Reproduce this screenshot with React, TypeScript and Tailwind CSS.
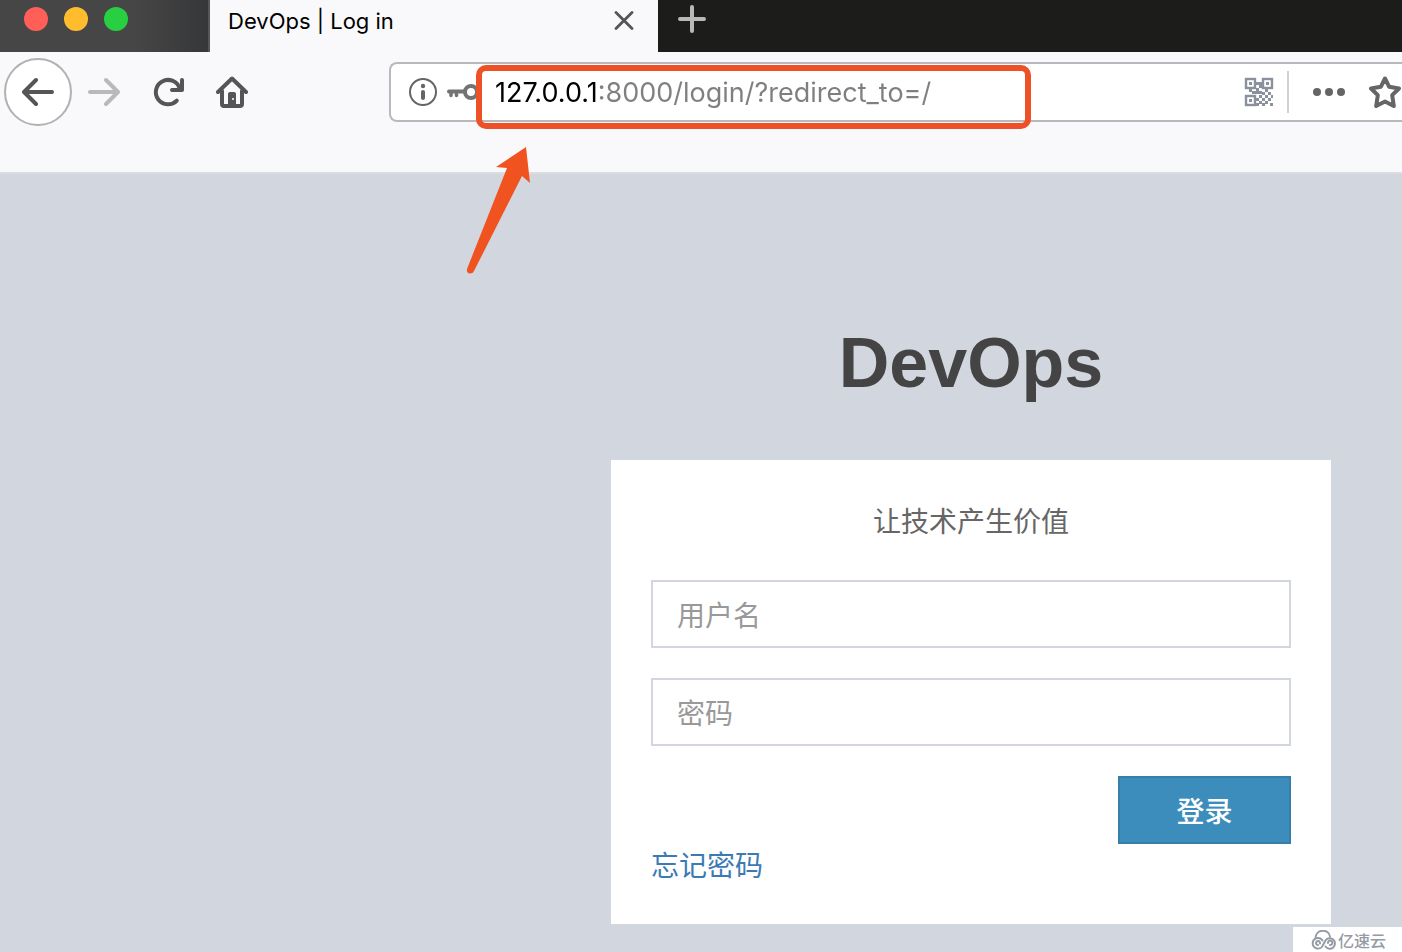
import { useState } from "react";

const BackIcon = () => (
  <svg width="32" height="32" viewBox="0 0 32 32" fill="none" stroke="currentColor" strokeWidth="4" strokeLinecap="round" strokeLinejoin="round">
    <path d="M14 4 L2 16 L14 28 M3 16 H30" />
  </svg>
);

const ForwardIcon = () => (
  <svg width="32" height="32" viewBox="0 0 32 32" fill="none" stroke="currentColor" strokeWidth="4" strokeLinecap="round" strokeLinejoin="round">
    <path d="M18 4 L30 16 L18 28 M29 16 H2" />
  </svg>
);

const ReloadIcon = () => (
  <svg width="32" height="32" viewBox="0 0 32 32" fill="none" stroke="currentColor" strokeWidth="4" strokeLinecap="round" strokeLinejoin="round">
    <path d="M24.8 24.6 A12.2 12.2 0 1 1 27.5 12" />
    <path d="M30 4 V14 H20" />
    <path d="M30 8 V14 H24 Z" fill="currentColor" stroke="none" />
  </svg>
);

const HomeIcon = () => (
  <svg width="32" height="32" viewBox="0 0 32 32" fill="none" stroke="currentColor" strokeWidth="4" strokeLinecap="round" strokeLinejoin="round">
    <path d="M2 16 L16 2.5 L30 16" />
    <path d="M6 15 V28 Q6 30 8 30 H24 Q26 30 26 28 V15" />
    <path d="M12 30 V18 Q12 16 14 16 H18 Q20 16 20 18 V30 Z" fill="currentColor" stroke="none" />
    <circle cx="17" cy="23" r="1" fill="#fff" stroke="none" />
  </svg>
);

const InfoIcon = () => (
  <svg width="28" height="28" viewBox="0 0 28 28" fill="none" stroke="currentColor">
    <circle cx="14" cy="14" r="13" strokeWidth="2" />
    <circle cx="14" cy="8" r="2.2" fill="currentColor" stroke="none" />
    <path d="M14 14 V20" strokeWidth="4" strokeLinecap="round" />
  </svg>
);

const KeyIcon = () => (
  <svg width="32" height="32" viewBox="0 0 32 32" fill="none" stroke="currentColor">
    <circle cx="24" cy="16" r="6" strokeWidth="4" />
    <path d="M2 15.5 H17" strokeWidth="4" strokeLinecap="round" />
    <path d="M4 16 V19.500 M9.5 16 V19.500" strokeWidth="3.5" strokeLinecap="round" />
  </svg>
);

const QrIcon = () => (
  <svg width="30" height="30" viewBox="0 0 30 30" fill="none" stroke="currentColor" strokeWidth="2.4">
    <rect x="2" y="2" width="9" height="9" />
    <rect x="19" y="2" width="9" height="9" />
    <rect x="2" y="19" width="9" height="9" />
    <path d="M5 5h3v3h-3z M22 5h3v3h-3z M5 22h3v3h-3z" fill="currentColor" stroke="none" />
    <path
      d="M12 5h6v3h-6z M12 11h3v3h-3z M15 8h3v3h-3z M5 12h3v3h-3z M8 14h4v3h-4z M12 14h6v3h-6z M21 12h3v3h-3z M18 15h3v3h-3z M24 15h3v3h-3z M15 18h3v3h-3z M21 18h3v3h-3z M27 18h2v3h-2z M12 21h3v3h-3z M18 21h3v3h-3z M24 21h3v3h-3z M15 24h3v3h-3z M21 24h3v3h-3z M26 26h3v3h-3z M12 26h3v3h-3z M18 26h3v3h-3z"
      fill="currentColor"
      stroke="none"
    />
  </svg>
);

const MoreIcon = () => (
  <svg width="32" height="32" viewBox="0 0 32 32" fill="currentColor">
    <circle cx="4" cy="16" r="4" />
    <circle cx="16" cy="16" r="4" />
    <circle cx="28" cy="16" r="4" />
  </svg>
);

const StarIcon = () => (
  <svg width="32" height="32" viewBox="0 0 32 32" fill="none" stroke="currentColor" strokeWidth="4" strokeLinejoin="round">
    <path d="M16 2.5 L20.2 10.8 L30 12.5 L23.2 19.2 L24.8 30 L16 25.4 L7.2 30 L8.8 19.2 L2 12.5 L11.8 10.8 Z" />
  </svg>
);

const CloudIcon = () => (
  <svg width="26" height="20" viewBox="0 0 26 20" fill="none" stroke="currentColor" strokeWidth="2" strokeLinecap="round">
    <path d="M4.5 8.5 C4.500 -1.500 18 -1.500 19 6.500" />
    <path d="M9 13.500 A2 2 0 1 0 7 15 M7 8 A5.300 5.300 0 1 0 12 15 L14.500 10.500 A5.200 5.200 0 1 1 14.500 16.500 M7 8 Q10 8 11.500 10.500" />
    <path d="M17 13 A2.200 2.200 0 1 1 19 15" />
  </svg>
);

const App = () => {
  const [url, setUrl] = useState("127.0.0.1:8000/login/?redirect_to=/");

  return (
    <div className="relative flex min-h-screen flex-col overflow-hidden bg-[#d2d6de] font-['Noto_Sans_CJK_SC',sans-serif]">
      {/* Tab strip */}
      <div className="flex h-13 bg-[#1c1d1a]">
        <div className="flex w-[210px] shrink-0 items-center gap-4 border-r-2 border-[#55565a] bg-linear-to-r from-[#464646] from-65% to-[#363739] pb-3.5 pl-6">
          <button aria-label="Close window" className="size-6 rounded-full bg-[#ff5f57]" />
          <button aria-label="Minimize window" className="size-6 rounded-full bg-[#ffbd2e]" />
          <button aria-label="Zoom window" className="size-6 rounded-full bg-[#28cf41]" />
        </div>
        <div className="flex w-[448px] shrink-0 items-center justify-between bg-[#f9f9fb] pr-6 pb-2.5 pl-[18px]">
          <span className="font-['Inter',sans-serif] text-[22px] text-black">DevOps | Log in</span>
          <button aria-label="Close tab" className="text-[#555557]">
            <svg width="20" height="20" viewBox="0 0 20 20" fill="none" stroke="currentColor" strokeWidth="2.8" strokeLinecap="round">
              <path d="M2 1.500 L18 17.500 M18 1.500 L2 17.500" />
            </svg>
          </button>
        </div>
        <button aria-label="New tab" className="ml-5 pb-3.5 text-[#b8b9b7]">
          <svg width="28" height="28" viewBox="0 0 28 28" fill="none" stroke="currentColor" strokeWidth="4" strokeLinecap="round">
            <path d="M14 2 V26 M2 14 H26" />
          </svg>
        </button>
      </div>

      {/* Toolbar */}
      <div className="relative z-10 flex h-[122px] items-start border-b-2 border-[#dcdde1] bg-[#f9f9fb] pt-1.5 pl-1">
        <div className="flex h-17 items-center gap-8 text-[#555557]">
          <div className="flex items-center gap-4">
            <button aria-label="Back" className="flex size-17 items-center justify-center rounded-full border-2 border-[#b1b1b3] bg-white">
              <BackIcon />
            </button>
            <button aria-label="Forward" className="text-[#b9b9bb]">
              <ForwardIcon />
            </button>
          </div>
          <button aria-label="Reload">
            <ReloadIcon />
          </button>
          <button aria-label="Home">
            <HomeIcon />
          </button>
        </div>

        <div className="relative mt-1 ml-[141px] flex h-15 flex-1 items-center rounded-l-lg border-2 border-r-0 border-[#b9b9bc] bg-white pr-px pl-[18px] text-[#656567]">
          <button aria-label="Site information">
            <InfoIcon />
          </button>
          <button aria-label="Saved login" className="ml-2.5 text-[#737375]">
            <KeyIcon />
          </button>
          {/* host in black, the rest of the address in gray */}
          <input
            type="text"
            aria-label="Address"
            value={url}
            onChange={(e) => setUrl(e.target.value)}
            className="ml-4 h-14 min-w-0 flex-1 bg-linear-to-r from-black from-[104px] to-[#7f7f81] to-[104px] bg-clip-text font-['Inter',sans-serif] text-[27px] text-transparent outline-none"
          />
          <button aria-label="QR code" className="text-[#8a909c]">
            <QrIcon />
          </button>
          <span className="mx-[13px] h-[42px] w-0.5 bg-[#d0d0d2]" />
          <button aria-label="Page actions" className="ml-[11px]">
            <MoreIcon />
          </button>
          <button aria-label="Bookmark" className="ml-6">
            <StarIcon />
          </button>

          <div className="pointer-events-none absolute top-px left-[85px] h-16 w-[555px] rounded-[10px] border-6 border-[#ee5028]" />
          <svg className="pointer-events-none absolute top-[82px] left-[74px]" width="68" height="130" viewBox="0 0 68 130" fill="#f0531f">
            <path d="M61 1 L31 21 L42 22 L2 123 Q1.500 127 5 127.500 Q8 127.500 9 125 L57 30 L65 37 Z" />
          </svg>
        </div>
      </div>

      {/* Login page */}
      <main className="flex flex-1 justify-end pt-34 pr-[71px] pb-7">
        <div className="w-[720px]">
          <h1 className="mb-11 text-center font-['Liberation_Sans',sans-serif] text-[70px] leading-[106px] font-bold text-[#444]">DevOps</h1>
          <form className="bg-white p-10 text-[28px] leading-10" onSubmit={(e) => e.preventDefault()}>
            <p className="pb-10 text-center text-[#666]">让技术产生价值</p>
            <input
              type="text"
              aria-label="用户名"
              placeholder="用户名"
              className="mb-[30px] block h-17 w-full border-2 border-[#d2d6de] px-6 placeholder:text-[#999] focus:outline-none"
            />
            <input
              type="password"
              aria-label="密码"
              placeholder="密码"
              className="mb-[30px] block h-17 w-full border-2 border-[#d2d6de] px-6 placeholder:text-[#999] focus:outline-none"
            />
            <button type="submit" className="ml-auto block h-17 w-[173px] border-2 border-[#367fa9] bg-[#3c8dbc] font-medium text-white">
              登录
            </button>
            <a href="#" className="block w-fit text-[#3c7ab5]">
              忘记密码
            </a>
          </form>
        </div>
      </main>

      {/* Watermark */}
      <div className="absolute right-0 bottom-0 flex h-[25px] w-[109px] items-center gap-px bg-white pl-[18px] text-[#959ba5]">
        <CloudIcon />
        <span className="text-base leading-6 font-medium">亿速云</span>
      </div>
    </div>
  );
};

export default App;
